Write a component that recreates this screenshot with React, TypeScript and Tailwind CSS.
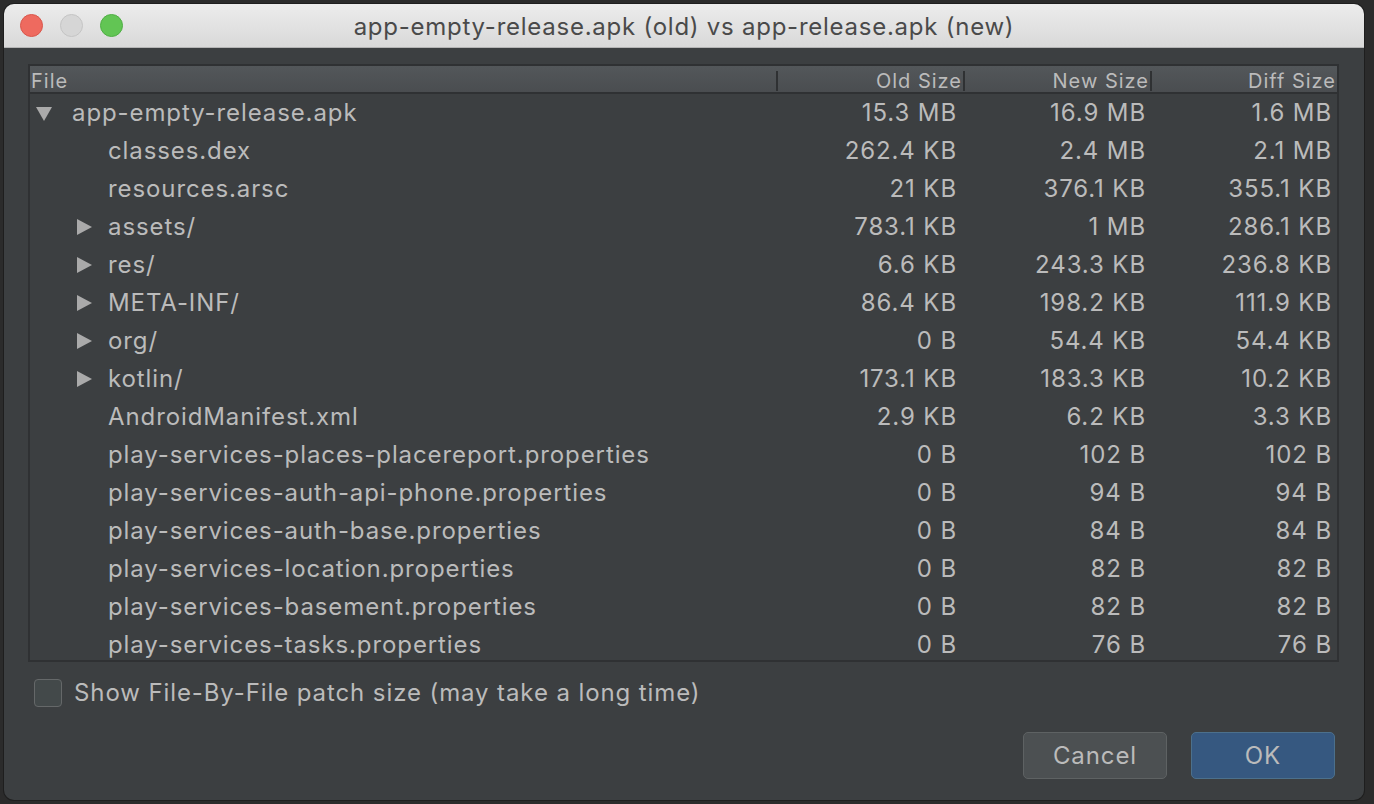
import React from "react";

type Row = {
  name: string;
  depth: number;
  arrow?: "open" | "closed";
  old: string;
  next: string;
  diff: string;
};

const rows: Row[] = [
  { name: "app-empty-release.apk", depth: 0, arrow: "open", old: "15.3 MB", next: "16.9 MB", diff: "1.6 MB" },
  { name: "classes.dex", depth: 1, old: "262.4 KB", next: "2.4 MB", diff: "2.1 MB" },
  { name: "resources.arsc", depth: 1, old: "21 KB", next: "376.1 KB", diff: "355.1 KB" },
  { name: "assets/", depth: 1, arrow: "closed", old: "783.1 KB", next: "1 MB", diff: "286.1 KB" },
  { name: "res/", depth: 1, arrow: "closed", old: "6.6 KB", next: "243.3 KB", diff: "236.8 KB" },
  { name: "META-INF/", depth: 1, arrow: "closed", old: "86.4 KB", next: "198.2 KB", diff: "111.9 KB" },
  { name: "org/", depth: 1, arrow: "closed", old: "0 B", next: "54.4 KB", diff: "54.4 KB" },
  { name: "kotlin/", depth: 1, arrow: "closed", old: "173.1 KB", next: "183.3 KB", diff: "10.2 KB" },
  { name: "AndroidManifest.xml", depth: 1, old: "2.9 KB", next: "6.2 KB", diff: "3.3 KB" },
  { name: "play-services-places-placereport.properties", depth: 1, old: "0 B", next: "102 B", diff: "102 B" },
  { name: "play-services-auth-api-phone.properties", depth: 1, old: "0 B", next: "94 B", diff: "94 B" },
  { name: "play-services-auth-base.properties", depth: 1, old: "0 B", next: "84 B", diff: "84 B" },
  { name: "play-services-location.properties", depth: 1, old: "0 B", next: "82 B", diff: "82 B" },
  { name: "play-services-basement.properties", depth: 1, old: "0 B", next: "82 B", diff: "82 B" },
  { name: "play-services-tasks.properties", depth: 1, old: "0 B", next: "76 B", diff: "76 B" },
];

function Arrow({ kind }: { kind: "open" | "closed" }) {
  return (
    <svg width="18" height="18" viewBox="0 0 18 18" className="shrink-0">
      {kind === "open" ? (
        <path d="M1 3 L17 3 L9 17 Z" fill="#aaaaaa" />
      ) : (
        <path d="M2 1 L17 9 L2 17 Z" fill="#aaaaaa" />
      )}
    </svg>
  );
}

function HeaderCell({ label, first }: { label: string; first?: boolean }) {
  return (
    <div
      className={
        first
          ? "flex-1 pl-[1px] text-left"
          : "w-[187px] shrink-0 border-l-2 border-[#2f3133] pr-[1px] text-right"
      }
    >
      {label}
    </div>
  );
}

export default function App() {
  return (
    <div
      className="h-[804px] w-[1374px] overflow-hidden bg-[#2b2b2b] pt-[4px] pl-[4px]"
      style={{ fontFamily: "Inter, 'Liberation Sans', sans-serif" }}
    >
      <div className="flex h-[796px] w-[1360px] flex-col overflow-hidden rounded-[10px] bg-[#3c3f41] shadow-[0_0_0_1px_#1e1e1e]">
        {/* title bar */}
        <div className="relative flex h-[44px] shrink-0 items-center justify-center border-b border-[#b5b5b5] bg-gradient-to-b from-[#ececec] to-[#d9d9d9]">
          <div className="absolute left-[16px] top-[10px] flex gap-[17px]">
            <span className="h-[23px] w-[23px] rounded-full border border-[#d8564b] bg-[#ee6a5f]" />
            <span className="h-[23px] w-[23px] rounded-full border border-[#c4c4c4] bg-[#d6d6d6]" />
            <span className="h-[23px] w-[23px] rounded-full border border-[#4fae44] bg-[#62c554]" />
          </div>
          <span className="pt-[2px] text-[24px] tracking-[0.75px] text-[#4a4a4a]">
            app-empty-release.apk (old) vs app-release.apk (new)
          </span>
        </div>

        {/* body */}
        <div className="flex flex-1 flex-col px-[24px] pt-[16px]">
          <div className="flex h-[598px] w-[1311px] flex-col overflow-hidden border-2 border-[#2f3133]">
            <div className="flex h-[28px] shrink-0 items-center border-b-2 border-[#2f3133] bg-gradient-to-b from-[#53575a] to-[#4a4d50] pt-[3px] text-[20px] leading-none tracking-[1px] text-[#bbbbbb]">
              <HeaderCell label="File" first />
              <HeaderCell label="Old Size" />
              <HeaderCell label="New Size" />
              <HeaderCell label="Diff Size" />
            </div>
            <div className="flex flex-col text-[24px] tracking-[0.9px] text-[#bbbbbb]">
              {rows.map((r) => (
                <div key={r.name} className="flex h-[38px] shrink-0 items-center">
                  <div
                    className={
                      r.depth === 0
                        ? "flex flex-1 items-center gap-[19px] pl-[5px]"
                        : "flex flex-1 items-center gap-[15px] pl-[45px]"
                    }
                  >
                    {r.arrow ? <Arrow kind={r.arrow} /> : <span className="w-[18px] shrink-0" />}
                    <span>{r.name}</span>
                  </div>
                  <div className="w-[187px] shrink-0 pr-[4px] text-right">{r.old}</div>
                  <div className="w-[189px] shrink-0 pr-[4px] text-right">{r.next}</div>
                  <div className="w-[187px] shrink-0 pr-[5px] text-right">{r.diff}</div>
                </div>
              ))}
            </div>
          </div>

          <label className="mt-[13px] flex items-center gap-[12px] pl-[6px] text-[24px] tracking-[0.9px] text-[#bbbbbb]">
            <span className="h-[28px] w-[28px] rounded-[4px] border border-[#656869] bg-[#43494a]" />
            Show File-By-File patch size (may take a long time)
          </label>

          <div className="mt-[21px] flex justify-end gap-[24px] pr-[5px]">
            <button className="h-[47px] w-[144px] rounded-[5px] border border-[#5e6263] bg-[#4c5052] text-[24px] tracking-[0.9px] text-[#bbbbbb]">
              Cancel
            </button>
            <button className="h-[47px] w-[144px] rounded-[5px] border border-[#4c708c] bg-[#365880] text-[24px] tracking-[0.9px] text-[#bbbbbb]">
              OK
            </button>
          </div>
        </div>
      </div>
    </div>
  );
}
